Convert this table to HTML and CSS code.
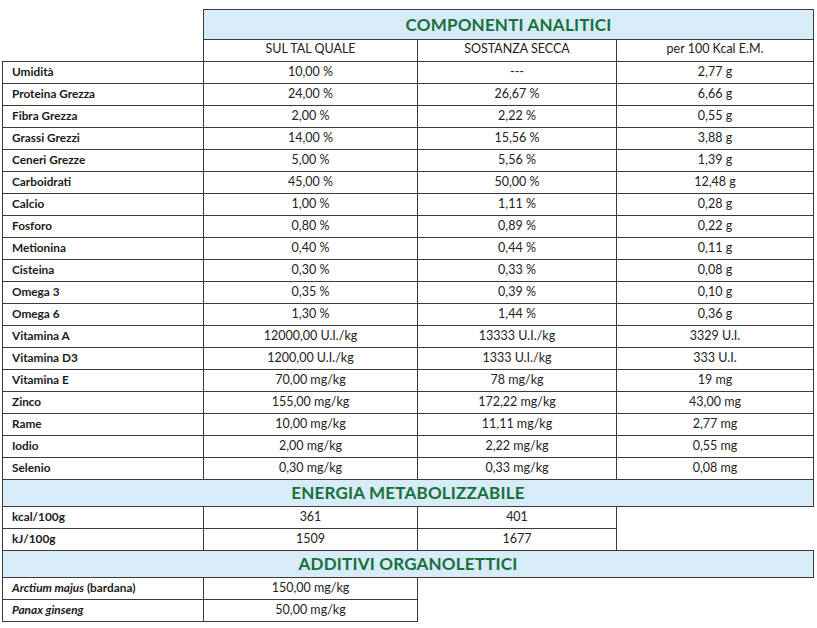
FILE: index.html
```html
<!DOCTYPE html>
<html lang="it">
<head>
<meta charset="utf-8">
<title>Componenti analitici</title>
<link rel="stylesheet" href="styles.css">
</head>
<body>
<div class="sheet">
<table class="nutri">
  <colgroup>
    <col class="c1"><col class="c2"><col class="c3"><col class="c4">
  </colgroup>
  <tr class="title-row">
    <td class="blank"></td>
    <td class="title" colspan="3">COMPONENTI ANALITICI</td>
  </tr>
  <tr class="sub-row">
    <td class="blank"></td>
    <td>SUL TAL QUALE</td>
    <td>SOSTANZA SECCA</td>
    <td>per 100 Kcal E.M.</td>
  </tr>
  <tr><th>Umidità</th><td>10,00 %</td><td>---</td><td>2,77 g</td></tr>
  <tr><th>Proteina Grezza</th><td>24,00 %</td><td>26,67 %</td><td>6,66 g</td></tr>
  <tr><th>Fibra Grezza</th><td>2,00 %</td><td>2,22 %</td><td>0,55 g</td></tr>
  <tr><th>Grassi Grezzi</th><td>14,00 %</td><td>15,56 %</td><td>3,88 g</td></tr>
  <tr><th>Ceneri Grezze</th><td>5,00 %</td><td>5,56 %</td><td>1,39 g</td></tr>
  <tr><th>Carboidrati</th><td>45,00 %</td><td>50,00 %</td><td>12,48 g</td></tr>
  <tr><th>Calcio</th><td>1,00 %</td><td>1,11 %</td><td>0,28 g</td></tr>
  <tr><th>Fosforo</th><td>0,80 %</td><td>0,89 %</td><td>0,22 g</td></tr>
  <tr><th>Metionina</th><td>0,40 %</td><td>0,44 %</td><td>0,11 g</td></tr>
  <tr><th>Cisteina</th><td>0,30 %</td><td>0,33 %</td><td>0,08 g</td></tr>
  <tr><th>Omega 3</th><td>0,35 %</td><td>0,39 %</td><td>0,10 g</td></tr>
  <tr><th>Omega 6</th><td>1,30 %</td><td>1,44 %</td><td>0,36 g</td></tr>
  <tr><th>Vitamina A</th><td>12000,00 U.I./kg</td><td>13333 U.I./kg</td><td>3329 U.I.</td></tr>
  <tr><th>Vitamina D3</th><td>1200,00 U.I./kg</td><td>1333 U.I./kg</td><td>333 U.I.</td></tr>
  <tr><th>Vitamina E</th><td>70,00 mg/kg</td><td>78 mg/kg</td><td>19 mg</td></tr>
  <tr><th>Zinco</th><td>155,00 mg/kg</td><td>172,22 mg/kg</td><td>43,00 mg</td></tr>
  <tr><th>Rame</th><td>10,00 mg/kg</td><td>11,11 mg/kg</td><td>2,77 mg</td></tr>
  <tr><th>Iodio</th><td>2,00 mg/kg</td><td>2,22 mg/kg</td><td>0,55 mg</td></tr>
  <tr><th>Selenio</th><td>0,30 mg/kg</td><td>0,33 mg/kg</td><td>0,08 mg</td></tr>
  <tr class="section-row">
    <td class="title" colspan="4">ENERGIA METABOLIZZABILE</td>
  </tr>
  <tr><th>kcal/100g</th><td>361</td><td>401</td><td class="blank"></td></tr>
  <tr><th>kJ/100g</th><td>1509</td><td>1677</td><td class="blank"></td></tr>
  <tr class="section-row">
    <td class="title" colspan="4">ADDITIVI ORGANOLETTICI</td>
  </tr>
  <tr><th><em>Arctium majus</em> (bardana)</th><td>150,00 mg/kg</td><td class="blank"></td><td class="blank"></td></tr>
  <tr><th><em>Panax ginseng</em></th><td>50,00 mg/kg</td><td class="blank"></td><td class="blank"></td></tr>
</table>
</div>
</body>
</html>
```

FILE: styles.css
```css
html, body {
  margin: 0;
  padding: 0;
  background: #ffffff;
}

.sheet {
  padding: 9px 0 0 2px;
}

.nutri {
  border-collapse: collapse;
  table-layout: fixed;
  width: 811px;
  font-family: "Lato", "Liberation Sans", sans-serif;
  font-size: 12.5px;
  color: #222222;
}

.c1 { width: 201px; }
.c2 { width: 214px; }
.c3 { width: 199px; }
.c4 { width: 197px; }

.nutri tr {
  height: 22px;
}

.nutri td,
.nutri th {
  border: 1px solid #3a3a3a;
  padding: 0 0 3px 0;
  line-height: 15px;
  text-align: center;
  vertical-align: middle;
  font-weight: 400;
  white-space: nowrap;
}

.nutri th {
  text-align: left;
  padding-left: 9px;
  font-size: 11.8px;
  font-weight: 700;
  color: #1a1a1a;
}

.nutri th em {
  font-style: italic;
}

.nutri td.blank {
  border: none;
}

.nutri .title-row {
  height: 30px;
}

.nutri .sub-row {
  height: 22px;
}

.nutri .sub-row td {
  padding-bottom: 4px;
}

.nutri .section-row {
  height: 27px;
}

.nutri td.title {
  background: #d7ebf8;
  color: #15703a;
  font-size: 17px;
  font-weight: 700;
  letter-spacing: 0.2px;
  padding: 0 0 1px 0;
}
```
